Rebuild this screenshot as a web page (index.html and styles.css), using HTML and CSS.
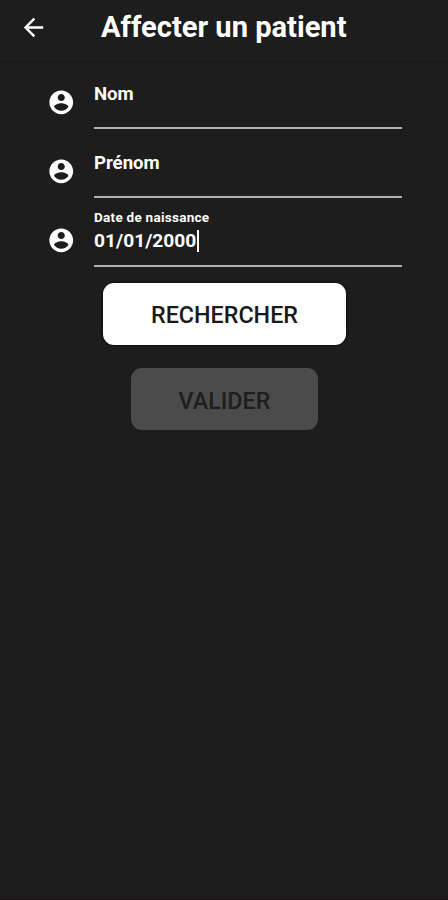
FILE: index.html
```html
<!DOCTYPE html>
<html lang="fr">
<head>
<meta charset="utf-8">
<title>Affecter un patient</title>
<link rel="stylesheet" href="styles.css">
</head>
<body>
<svg class="defs" aria-hidden="true">
  <symbol id="account" viewBox="0 0 24 24"><path d="M12 2C6.48 2 2 6.48 2 12s4.48 10 10 10 10-4.48 10-10S17.520 2 12 2zm0 3c1.660 0 3 1.340 3 3s-1.340 3-3 3-3-1.340-3-3 1.340-3 3-3zm0 14.200c-2.500 0-4.710-1.280-6-3.220.03-1.990 4-3.080 6-3.080 1.990 0 5.970 1.090 6 3.080-1.290 1.940-3.500 3.220-6 3.220z"/></symbol>
</svg>
<header class="bar">
  <svg class="back" viewBox="0 0 24 24"><path d="M20 11H7.830l5.590-5.590L12 4l-8 8 8 8 1.410-1.410L7.830 13H20v-2z"/></svg>
  <h1 class="title">Affecter un patient</h1>
</header>
<main class="form">
  <div class="field">
    <svg class="avatar"><use href="#account"/></svg>
    <div class="input"><span class="value">Nom</span></div>
  </div>
  <div class="field">
    <svg class="avatar"><use href="#account"/></svg>
    <div class="input"><span class="value">Prénom</span></div>
  </div>
  <div class="field">
    <svg class="avatar"><use href="#account"/></svg>
    <div class="input filled"><span class="label">Date de naissance</span><span class="value date">01/01/2000<i class="caret"></i></span></div>
  </div>
  <button class="btn search">RECHERCHER</button>
  <button class="btn validate" disabled>VALIDER</button>
</main>
</body>
</html>
```
FILE: styles.css
```css
* { box-sizing: border-box; }
body {
  margin: 0;
  height: 900px;
  display: flex;
  flex-direction: column;
  background: #1d1d1d;
  color: #fff;
  font-family: Roboto, "Liberation Sans", sans-serif;
}
.defs { display: none; }
.bar {
  height: 60px;
  display: flex;
  align-items: center;
  padding: 0 0 6px 18.500px;
  box-shadow: 0 1px 4px rgba(0, 0, 0, .2);
}
.back { width: 29px; height: 29px; fill: #fff; }
.title {
  margin: 0 0 0 53.500px;
  font-size: 29.100px;
  line-height: 34px;
  font-weight: 700;
  white-space: nowrap;
}
.form {
  flex: 1;
  display: flex;
  flex-direction: column;
  align-items: center;
  border-bottom: 1px solid #170d12;
}
.field {
  width: 448px;
  height: 69px;
  display: flex;
  align-items: flex-end;
  padding: 0 46px 0 47px;
}
.avatar { width: 28.500px; height: 28.500px; margin: 0 18.500px 12.800px 0; fill: #fff; }
.input {
  flex: 1;
  height: 48px;
  display: flex;
  flex-direction: column;
  border-bottom: 2px solid #b0b0b0;
}
.input.filled { height: 59px; }
.value { display: flex; align-items: center; font-size: 18.600px; line-height: 26px; font-weight: 700; }
.date { font-size: 19.200px; line-height: 30px; }
.label { font-size: 13.500px; line-height: 18px; font-weight: 700; letter-spacing: .27px; }
.caret { width: 2px; height: 22px; margin-left: 1px; background: #fff; }
.btn {
  border: 0;
  border-radius: 11px;
  padding: 2px 0 0;
  height: 62px;
  font: 500 23.300px/60px Roboto, "Liberation Sans", sans-serif;
}
.search { width: 243px; margin: 16px 0 0 1px; background: #fff; color: #1a1a1a; box-shadow: 0 0 2px 1px #101010; }
.validate { width: 187px; margin: 23px 0 0 1px; padding-top: 3px; background: #4b4b4b; color: #1e1e1e; }
```
